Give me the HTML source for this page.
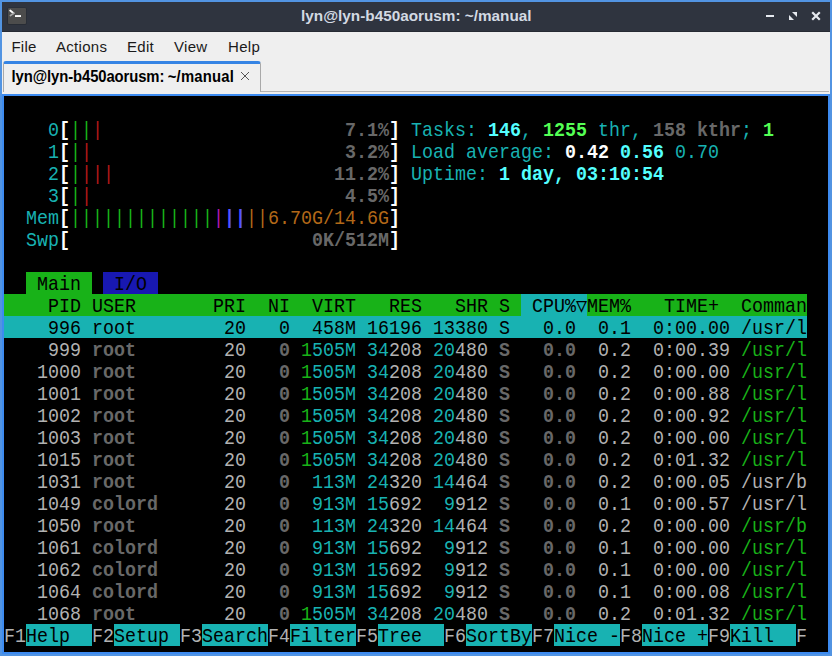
<!DOCTYPE html>
<html lang="en">
<head>
<meta charset="utf-8">
<title>lyn@lyn-b450aorusm: ~/manual</title>
<style>
html,body{margin:0;padding:0;}
body{width:832px;height:656px;overflow:hidden;background:#5294e2;position:relative;font-family:"Liberation Sans",sans-serif;}
#win{position:absolute;left:0;top:0;width:832px;height:656px;background:#5294e2;overflow:hidden;}
#titlebar{position:absolute;left:2px;top:2px;width:828px;height:30px;background:#2f343f;box-sizing:border-box;border-bottom:1px solid #262a33;}
#title{position:absolute;left:0;top:0;width:828px;height:29px;line-height:28px;text-align:center;color:#d3dae3;font-weight:bold;font-size:15.3px;white-space:nowrap;}
#title span{position:absolute;left:299.1px;top:0;}
#appicon{position:absolute;left:5px;top:5px;width:20px;height:18px;}
.wbtn{position:absolute;top:0;}
#menubar{position:absolute;left:2px;top:32px;width:828px;height:62px;background:#efefef;}
.mi{position:absolute;top:5px;height:20px;line-height:20px;font-size:15px;letter-spacing:0.3px;color:#1a1a1a;white-space:nowrap;}
#tabline{position:absolute;left:258px;top:59px;width:569px;height:1px;background:#b4b4b4;}
#tab{position:absolute;left:1px;top:29px;width:258px;height:31px;box-sizing:border-box;border-left:1px solid #a9a9a9;border-right:1px solid #a9a9a9;border-top:3px solid #3584e4;border-radius:3px 3px 0 0;background:#efefef;}
#tabtxt{position:absolute;left:7.5px;top:3px;height:20px;line-height:20px;transform:scaleY(1.09);transform-origin:0 15px;font-size:14.85px;font-weight:bold;color:#000;white-space:nowrap;}
#tabtxt .t1{letter-spacing:-0.1px;}
#tabtxt .t2{letter-spacing:0.2px;margin-left:-0.9px;}
#tabx{position:absolute;left:236px;top:7px;width:10px;height:10px;}
#termwrap{position:absolute;left:2px;top:94px;width:828px;height:560px;background:#3d8bf0;}
#term{position:absolute;left:2px;top:2px;width:824px;height:556px;background:#000;overflow:hidden;font-family:"Liberation Mono","DejaVu Sans Mono",monospace;font-size:18.33px;color:#b2b2b2;}
#ti{position:absolute;left:0;top:0;width:824px;}
.r{position:absolute;left:0;height:22px;width:824px;overflow:hidden;}
.r i{position:absolute;top:0;height:22px;display:block;}
.bgG{background:#18b218;}
.bgB{background:#1818b2;}
.bgC{background:#18b2b2;}
.t{position:absolute;left:0;top:0;width:824px;height:20.30769230769231px;line-height:26.75769230769231px;white-space:pre;transform:scaleY(1.0833333333333333);transform-origin:0 0;}
.k{color:#000;}
.c{color:#18b2b2;}
.g{color:#18b218;}
.rd{color:#b21818;}
.m{color:#b218b2;}
.y{color:#b26818;}
.w{color:#b2b2b2;}
.W{color:#fff;font-weight:bold;}
.K{color:#686868;font-weight:bold;}
.K2{color:#686868;font-weight:bold;}
.C{color:#54ffff;font-weight:bold;}
.G{color:#54ff54;font-weight:bold;}
.B{color:#5454ff;font-weight:bold;}
</style>
</head>
<body>
<div id="win">
  <div id="titlebar">
    <svg id="appicon" viewBox="0 0 20 18" width="20" height="18">
      <rect x="0.4" y="0.6" width="19.2" height="17.2" rx="1.6" fill="#262a33"/>
      <rect x="1" y="1" width="18" height="16" rx="1" fill="#4c4c4c"/>
      <path d="M3.2 3.6 L6.6 6.2" fill="none" stroke="#ffffff" stroke-width="1.9" stroke-linecap="round"/>
      <path d="M6.6 6.2 L3.4 8.6" fill="none" stroke="#a8a8a8" stroke-width="1.7" stroke-linecap="round"/>
      <rect x="8" y="8.1" width="6" height="1.9" fill="#ffffff"/>
    </svg>
    <div id="title"><span>lyn@lyn-b450aorusm: ~/manual</span></div>
    <svg class="wbtn" style="left:760px;" width="68" height="30" viewBox="0 0 68 30">
      <rect x="4" y="13" width="8" height="2" fill="#e6e9ef"/>
      <path d="M30 10 H35 V15 Z" fill="#e6e9ef"/>
      <path d="M27 13 V18 H32 Z" fill="#e6e9ef"/>
      <path d="M51 11 L57 17 M57 11 L51 17" stroke="#e6e9ef" stroke-width="2.2" stroke-linecap="square" fill="none"/>
    </svg>
  </div>
  <div id="menubar">
    <div class="mi" style="left:9.4px;">File</div>
    <div class="mi" style="left:54px;">Actions</div>
    <div class="mi" style="left:125px;">Edit</div>
    <div class="mi" style="left:172px;">View</div>
    <div class="mi" style="left:226px;">Help</div>
    <div id="tabline"></div>
    <div id="tab">
      <div id="tabtxt"><span class="t1">lyn@lyn-b450aorusm:</span><span class="t2"> ~/manual</span></div>
      <svg id="tabx" viewBox="0 0 10 10" width="10" height="10"><path d="M1 1 L9 9 M9 1 L1 9" stroke="#555" stroke-width="1" fill="none"/></svg>
    </div>
  </div>
  <div id="termwrap">
    <div id="term"><div id="ti">
<div class="r" style="top:0px"><div class="t"></div></div>
<div class="r" style="top:22px"><div class="t">  <span class="c">  0</span><span class="W">[</span><span class="g">||</span><span class="rd">|</span>                      <span class="K">7.1%</span><span class="W">]</span> <span class="c">Tasks: </span><span class="C">146</span><span class="c">, </span><span class="G">1255</span><span class="c"> thr</span><span class="c">, </span><span class="K">158 kthr</span><span class="c">; </span><span class="G">1</span></div></div>
<div class="r" style="top:44px"><div class="t">  <span class="c">  1</span><span class="W">[</span><span class="g">|</span><span class="rd">|</span>                       <span class="K">3.2%</span><span class="W">]</span> <span class="c">Load average: </span><span class="W">0.42</span> <span class="C">0.56</span> <span class="c">0.70</span></div></div>
<div class="r" style="top:66px"><div class="t">  <span class="c">  2</span><span class="W">[</span><span class="g">|</span><span class="rd">|||</span>                    <span class="K">11.2%</span><span class="W">]</span> <span class="c">Uptime: </span><span class="C">1 day, 03:10:54</span></div></div>
<div class="r" style="top:88px"><div class="t">  <span class="c">  3</span><span class="W">[</span><span class="g">|</span><span class="rd">|</span>                       <span class="K">4.5%</span><span class="W">]</span></div></div>
<div class="r" style="top:110px"><div class="t">  <span class="c">Mem</span><span class="W">[</span><span class="g">|||||||||||||</span><span class="m">|</span><span class="B">||</span><span class="y">||</span><span class="y">6.70G/14.6G</span><span class="W">]</span></div></div>
<div class="r" style="top:132px"><div class="t">  <span class="c">Swp</span><span class="W">[</span>                      <span class="K">0K/512M</span><span class="W">]</span></div></div>
<div class="r" style="top:154px"><div class="t"></div></div>
<div class="r" style="top:176px"><i class="bgG" style="left:22px;width:66px"></i><i class="bgB" style="left:99px;width:55px"></i><div class="t">  <span class="k"> Main </span> <span class="k"> I/O </span></div></div>
<div class="r" style="top:198px"><i class="bgG" style="left:0;width:803px"></i><i class="bgC" style="left:517px;width:66px"></i><div class="t k">    PID USER       PRI  NI  VIRT   RES   SHR S <span class="k"> CPU%▽</span>MEM%   TIME+  Comman</div></div>
<div class="r" style="top:220px"><i class="bgC" style="left:0;width:803px"></i><div class="t k">    996 root        20   0  458M 16196 13380 S   0.0  0.1  0:00.00 /usr/l</div></div>
<div class="r" style="top:242px"><div class="t"><span class="w">    999 </span><span class="K">root       </span><span class="w"> 20 </span><span class="K">  0 </span><span class="g">1</span><span class="c">505M </span><span class="c">34</span><span class="w">208 </span><span class="c">20</span><span class="w">480 </span><span class="K2">S </span><span class="K">  0.0 </span><span class="w"> 0.2 </span><span class="w"> 0:00.39 </span><span class="g">/usr/l</span></div></div>
<div class="r" style="top:264px"><div class="t"><span class="w">   1000 </span><span class="K">root       </span><span class="w"> 20 </span><span class="K">  0 </span><span class="g">1</span><span class="c">505M </span><span class="c">34</span><span class="w">208 </span><span class="c">20</span><span class="w">480 </span><span class="K2">S </span><span class="K">  0.0 </span><span class="w"> 0.2 </span><span class="w"> 0:00.00 </span><span class="g">/usr/l</span></div></div>
<div class="r" style="top:286px"><div class="t"><span class="w">   1001 </span><span class="K">root       </span><span class="w"> 20 </span><span class="K">  0 </span><span class="g">1</span><span class="c">505M </span><span class="c">34</span><span class="w">208 </span><span class="c">20</span><span class="w">480 </span><span class="K2">S </span><span class="K">  0.0 </span><span class="w"> 0.2 </span><span class="w"> 0:00.88 </span><span class="g">/usr/l</span></div></div>
<div class="r" style="top:308px"><div class="t"><span class="w">   1002 </span><span class="K">root       </span><span class="w"> 20 </span><span class="K">  0 </span><span class="g">1</span><span class="c">505M </span><span class="c">34</span><span class="w">208 </span><span class="c">20</span><span class="w">480 </span><span class="K2">S </span><span class="K">  0.0 </span><span class="w"> 0.2 </span><span class="w"> 0:00.92 </span><span class="g">/usr/l</span></div></div>
<div class="r" style="top:330px"><div class="t"><span class="w">   1003 </span><span class="K">root       </span><span class="w"> 20 </span><span class="K">  0 </span><span class="g">1</span><span class="c">505M </span><span class="c">34</span><span class="w">208 </span><span class="c">20</span><span class="w">480 </span><span class="K2">S </span><span class="K">  0.0 </span><span class="w"> 0.2 </span><span class="w"> 0:00.00 </span><span class="g">/usr/l</span></div></div>
<div class="r" style="top:352px"><div class="t"><span class="w">   1015 </span><span class="K">root       </span><span class="w"> 20 </span><span class="K">  0 </span><span class="g">1</span><span class="c">505M </span><span class="c">34</span><span class="w">208 </span><span class="c">20</span><span class="w">480 </span><span class="K2">S </span><span class="K">  0.0 </span><span class="w"> 0.2 </span><span class="w"> 0:01.32 </span><span class="g">/usr/l</span></div></div>
<div class="r" style="top:374px"><div class="t"><span class="w">   1031 </span><span class="K">root       </span><span class="w"> 20 </span><span class="K">  0 </span><span class="c"> 113M </span><span class="c">24</span><span class="w">320 </span><span class="c">14</span><span class="w">464 </span><span class="K2">S </span><span class="K">  0.0 </span><span class="w"> 0.2 </span><span class="w"> 0:00.05 </span><span class="w">/usr/b</span></div></div>
<div class="r" style="top:396px"><div class="t"><span class="w">   1049 </span><span class="K">colord     </span><span class="w"> 20 </span><span class="K">  0 </span><span class="c"> 913M </span><span class="c">15</span><span class="w">692 </span><span class="c"> 9</span><span class="w">912 </span><span class="K2">S </span><span class="K">  0.0 </span><span class="w"> 0.1 </span><span class="w"> 0:00.57 </span><span class="w">/usr/l</span></div></div>
<div class="r" style="top:418px"><div class="t"><span class="w">   1050 </span><span class="K">root       </span><span class="w"> 20 </span><span class="K">  0 </span><span class="c"> 113M </span><span class="c">24</span><span class="w">320 </span><span class="c">14</span><span class="w">464 </span><span class="K2">S </span><span class="K">  0.0 </span><span class="w"> 0.2 </span><span class="w"> 0:00.00 </span><span class="g">/usr/b</span></div></div>
<div class="r" style="top:440px"><div class="t"><span class="w">   1061 </span><span class="K">colord     </span><span class="w"> 20 </span><span class="K">  0 </span><span class="c"> 913M </span><span class="c">15</span><span class="w">692 </span><span class="c"> 9</span><span class="w">912 </span><span class="K2">S </span><span class="K">  0.0 </span><span class="w"> 0.1 </span><span class="w"> 0:00.00 </span><span class="g">/usr/l</span></div></div>
<div class="r" style="top:462px"><div class="t"><span class="w">   1062 </span><span class="K">colord     </span><span class="w"> 20 </span><span class="K">  0 </span><span class="c"> 913M </span><span class="c">15</span><span class="w">692 </span><span class="c"> 9</span><span class="w">912 </span><span class="K2">S </span><span class="K">  0.0 </span><span class="w"> 0.1 </span><span class="w"> 0:00.00 </span><span class="g">/usr/l</span></div></div>
<div class="r" style="top:484px"><div class="t"><span class="w">   1064 </span><span class="K">colord     </span><span class="w"> 20 </span><span class="K">  0 </span><span class="c"> 913M </span><span class="c">15</span><span class="w">692 </span><span class="c"> 9</span><span class="w">912 </span><span class="K2">S </span><span class="K">  0.0 </span><span class="w"> 0.1 </span><span class="w"> 0:00.08 </span><span class="g">/usr/l</span></div></div>
<div class="r" style="top:506px"><div class="t"><span class="w">   1068 </span><span class="K">root       </span><span class="w"> 20 </span><span class="K">  0 </span><span class="g">1</span><span class="c">505M </span><span class="c">34</span><span class="w">208 </span><span class="c">20</span><span class="w">480 </span><span class="K2">S </span><span class="K">  0.0 </span><span class="w"> 0.2 </span><span class="w"> 0:01.32 </span><span class="g">/usr/l</span></div></div>
<div class="r" style="top:528px"><i class="bgC" style="left:22px;width:66px"></i><i class="bgC" style="left:110px;width:66px"></i><i class="bgC" style="left:198px;width:66px"></i><i class="bgC" style="left:286px;width:66px"></i><i class="bgC" style="left:374px;width:66px"></i><i class="bgC" style="left:462px;width:66px"></i><i class="bgC" style="left:550px;width:66px"></i><i class="bgC" style="left:638px;width:66px"></i><i class="bgC" style="left:726px;width:66px"></i><div class="t"><span class="w">F1</span><span class="k">Help  </span><span class="w">F2</span><span class="k">Setup </span><span class="w">F3</span><span class="k">Search</span><span class="w">F4</span><span class="k">Filter</span><span class="w">F5</span><span class="k">Tree  </span><span class="w">F6</span><span class="k">SortBy</span><span class="w">F7</span><span class="k">Nice -</span><span class="w">F8</span><span class="k">Nice +</span><span class="w">F9</span><span class="k">Kill  </span><span class="w">F</span></div></div>
    </div></div>
  </div>
</div>
</body>
</html>
